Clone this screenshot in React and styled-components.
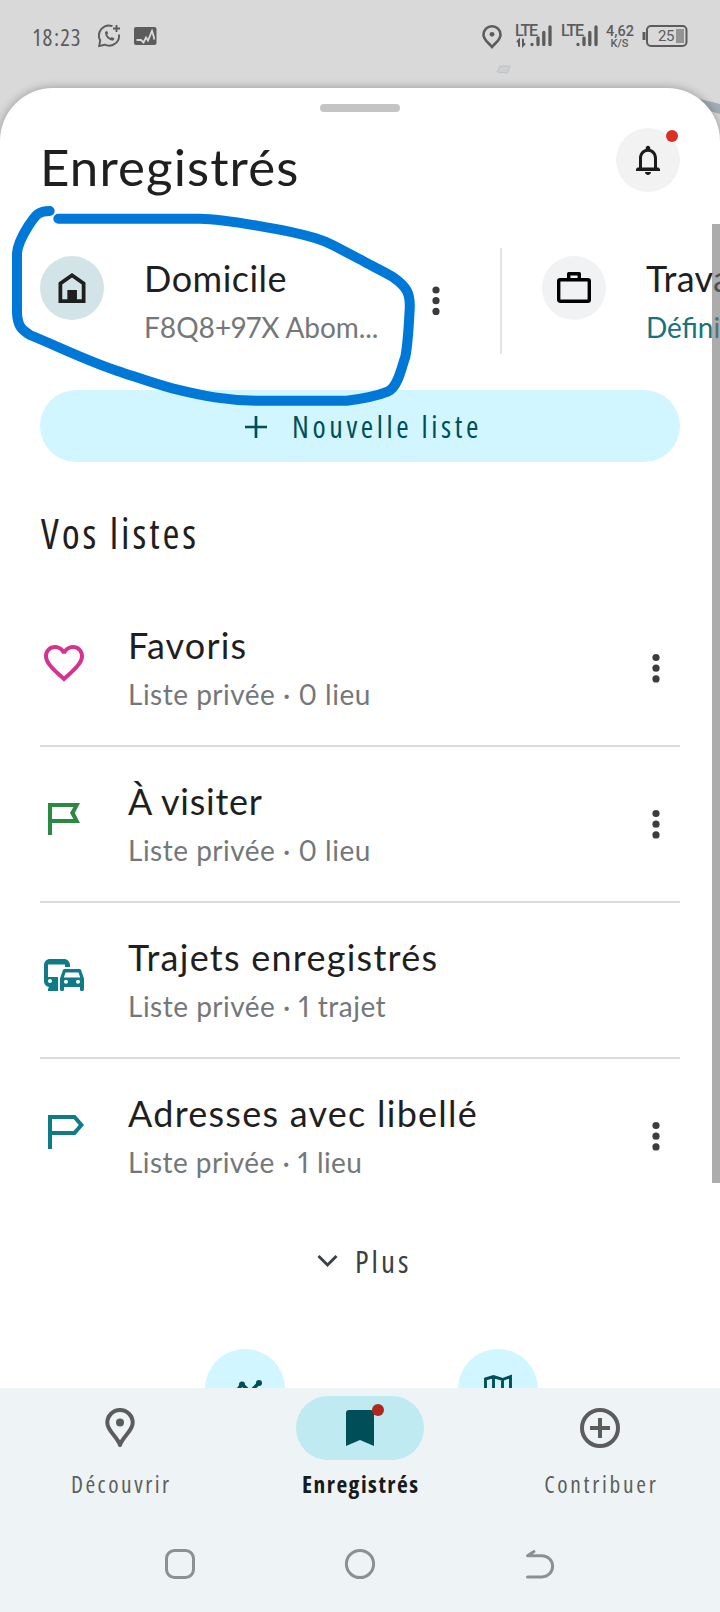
import React from 'react';
import styled, { createGlobalStyle } from 'styled-components';

const GlobalStyle = createGlobalStyle`
  * {
    box-sizing: border-box;
  }

  body {
    margin: 0;
    background-color: #fff;
    font-family: Lato, 'Open Sans', sans-serif;
    font-variant-numeric: proportional-nums;
    color: #1f1f1f;
  }

  svg {
    display: block;
    flex: none;
  }
`;

const Screen = styled.div`
  position: relative;
  width: 720px;
  height: 1612px;
  display: flex;
  flex-direction: column;
  background-color: #d9d9d9;
  overflow: hidden;
`;

const StatusBar = styled.header`
  height: 88px;
  flex: none;
  padding: 24px 32px 0 33px;
  display: flex;
  align-items: flex-start;
  color: #5c5c5c;
`;

const Clock = styled.span`
  width: 65px;
  height: 24px;
  font-family: 'Open Sans', sans-serif;
  font-stretch: 75%;
  font-size: 23px;
  line-height: 26px;
  letter-spacing: ${({ $spacing }) => $spacing}px;
  white-space: nowrap;
`;

const StatusIcons = styled.div`
  display: flex;
  gap: ${({ $gap }) => $gap || 0}px;
  margin-left: ${({ $push }) => ($push ? 'auto' : 0)};
`;

const Signal = styled.div`
  position: relative;
  width: 37px;
  height: 24px;
`;

const SignalLabel = styled.span`
  position: absolute;
  left: 0;
  top: 0;
  font: 500 16px/14px Roboto, sans-serif;
  letter-spacing: -1.2px;
`;

const Speed = styled.div`
  width: 27px;
  margin-left: -1px;
  text-align: center;
  font: 500 14.5px/14px Roboto, sans-serif;
  padding-top: 1px;

  & > small {
    display: block;
    font-size: 11px;
    line-height: 10px;
  }
`;

const Battery = styled.div`
  position: relative;
  width: 46px;
  height: 24px;

  & > span {
    position: absolute;
    left: 16px;
    top: 5px;
    font: 15px/15px Roboto, sans-serif;
    letter-spacing: -0.5px;
  }
`;

const MapPeek = styled.svg`
  position: absolute;
  left: 0;
  top: 0;
`;

const Sheet = styled.main`
  position: relative;
  height: 1300px;
  flex: none;
  display: flex;
  flex-direction: column;
  border-radius: 53px 53px 0 0;
  background-color: #fff;
  box-shadow: 0 0 10px rgba(0, 0, 0, 0.32);
`;

const Handle = styled.div`
  width: 80px;
  height: 8px;
  flex: none;
  margin: 16px auto 0;
  border-radius: 4px;
  background-color: #c4c4c4;
`;

const Header = styled.div`
  height: 80px;
  flex: none;
  padding: 16px 40px 0;
  display: flex;
  justify-content: space-between;
`;

const Title = styled.h1`
  margin: 9px 0 0;
  font-weight: 400;
  font-size: 51px;
  line-height: 60px;
  letter-spacing: ${({ $spacing }) => $spacing}px;
`;

const Circle = styled.div`
  position: relative;
  width: ${({ $size }) => $size || 64}px;
  height: ${({ $size }) => $size || 64}px;
  flex: none;
  display: flex;
  align-items: center;
  justify-content: center;
  border-radius: 50%;
  background-color: ${({ $color }) => $color};
`;

const Dot = styled.span`
  position: absolute;
  width: 12px;
  height: 12px;
  top: ${({ $top }) => $top}px;
  right: ${({ $right }) => $right}px;
  border-radius: 50%;
  background-color: ${({ $color }) => $color};
`;

const Places = styled.section`
  height: 198px;
  flex: none;
  padding: 56px 0 0 40px;
  display: flex;
  overflow: hidden;
`;

const Place = styled.div`
  width: ${({ $width }) => $width}px;
  height: 106px;
  flex: none;
  padding-top: 8px;
  display: flex;
  border-right: ${({ $divider }) => ($divider ? '2px solid #e3e4e6' : '0')};

  & + & {
    padding-left: 40px;
  }
`;

const PlaceText = styled.div`
  width: 326px;
  flex: none;
  padding: 0 0 0 40px;
`;

const Name = styled.div`
  font-size: 36px;
  line-height: 44px;
  letter-spacing: ${({ $spacing }) => $spacing || 0}px;
  white-space: nowrap;
`;

const Detail = styled.div`
  margin-top: 10px;
  font-size: 28px;
  line-height: 34px;
  letter-spacing: ${({ $spacing }) => $spacing || 0}px;
  color: ${({ $color }) => $color || '#747779'};
  white-space: nowrap;
`;

const NewList = styled.button`
  width: 640px;
  height: 72px;
  flex: none;
  margin: 0 40px;
  padding: 2px 0 0 205px;
  display: flex;
  align-items: center;
  gap: 25px;
  border: 0;
  border-radius: 36px;
  background-color: #d1f6ff;
  color: #004f58;
  font-family: 'Open Sans', sans-serif;
  font-stretch: 75%;
  font-size: 30px;
  line-height: 36px;
  letter-spacing: ${({ $spacing }) => $spacing}px;
`;

const Heading = styled.h2`
  margin: 47px 41px 34px;
  font-family: 'Open Sans', sans-serif;
  font-stretch: 75%;
  font-weight: 400;
  font-size: 41px;
  line-height: 48px;
  letter-spacing: ${({ $spacing }) => $spacing}px;
`;

const Lists = styled.ul`
  margin: 0 40px;
  padding: 0;
  list-style: none;
`;

const ListRow = styled.li`
  height: 156px;
  display: flex;
  border-bottom: 2px solid #dadbdc;

  &:last-child {
    border-bottom: 0;
  }

  & > svg:first-child {
    margin-top: 48px;
  }
`;

const RowText = styled.div`
  width: 562px;
  padding: 32px 0 0 40px;
`;

const More = styled.div`
  height: 38px;
  flex: none;
  margin-top: 27px;
  padding-left: 317px;
  display: flex;
  align-items: center;
  gap: 17px;
  font-family: 'Open Sans', sans-serif;
  font-stretch: 75%;
  font-size: 31px;
  line-height: 38px;
  color: #3c4043;
  letter-spacing: ${({ $spacing }) => $spacing}px;
`;

const Shortcuts = styled.div`
  height: 39px;
  margin-top: 69px;
  padding-left: 205px;
  display: flex;
  gap: 173px;
  overflow: hidden;
`;

const Scrollbar = styled.div`
  position: absolute;
  right: 0;
  top: 136px;
  width: 8px;
  height: 959px;
  background-color: rgba(117, 117, 117, 0.6);
`;

const Scribble = styled.svg`
  position: absolute;
  left: 0;
  top: 200px;
`;

const BottomBar = styled.footer`
  position: relative;
  height: 224px;
  flex: none;
  background-color: #eef4f6;
`;

const Tabs = styled.nav`
  height: 136px;
  padding-top: 8px;
  display: grid;
  grid-template-columns: repeat(3, 240px);
`;

const Tab = styled.div`
  display: flex;
  flex-direction: column;
  align-items: center;
  color: ${({ $active }) => ($active ? '#171b1c' : '#5c5f60')};
  font-family: 'Open Sans', sans-serif;
  font-stretch: 75%;
  font-weight: ${({ $active }) => ($active ? 700 : 400)};
  font-size: 23.5px;
  line-height: 30px;
  letter-spacing: ${({ $spacing }) => $spacing}px;
  text-indent: ${({ $spacing }) => $spacing}px;
`;

const Pill = styled.div`
  position: relative;
  width: 128px;
  height: 64px;
  margin-bottom: 9px;
  display: flex;
  align-items: center;
  justify-content: center;
  border-radius: 32px;
  background-color: ${({ $active }) => ($active ? '#c0eaf2' : 'transparent')};
`;

const SystemKeys = styled.div`
  height: 88px;
  padding: 22px 160px 0;
  display: flex;
  justify-content: space-between;
`;

const Dots = ({ top, step = 10.7 }) => (
  <svg width="12" height="120" fill="#3c3c3c">
    <circle cx="6" cy={top} r="3.6" />
    <circle cx="6" cy={top + step} r="3.6" />
    <circle cx="6" cy={top + step * 2} r="3.6" />
  </svg>
);

const SignalBars = ({ arrows }) => (
  <svg width="37" height="24" stroke="#5c5c5c" strokeWidth="3.3" strokeLinecap="round" fill="none">
    <path d="M17 20.300v.2M23 14v6.500M28.800 8.500v12M35 3v17.500" />
    {arrows && <path d="M2.500 17.500 4 16v6M8 15.500v6l1.500-1.500" strokeWidth="2" />}
  </svg>
);

const HeartIcon = () => (
  <svg width="48" height="48" viewBox="0 0 24 24" fill="#d63390">
    <path d="M16.500 3c-1.740 0-3.410.810-4.500 2.090C10.910 3.810 9.240 3 7.500 3 4.420 3 2 5.420 2 8.500c0 3.780 3.400 6.860 8.550 11.540L12 21.350l1.450-1.320C18.600 15.360 22 12.280 22 8.500 22 5.420 19.580 3 16.500 3zm-4.400 15.550-.1.100-.1-.1C7.140 14.240 4 11.390 4 8.500 4 6.500 5.500 5 7.500 5c1.540 0 3.040.990 3.570 2.360h1.870C13.460 5.990 14.960 5 16.500 5c2 0 3.500 1.500 3.500 3.500 0 2.890-3.140 5.740-7.900 10.050z" />
  </svg>
);

const FlagIcon = () => (
  <svg width="48" height="48" viewBox="0 0 24 24" fill="#2a8a41" fillRule="evenodd">
    <path d="M4 4h16l-2.600 5 2.600 5H6v6H4zM6 6v6h10.700L15 9l1.700-3z" />
  </svg>
);

const CommuteIcon = () => (
  <svg width="48" height="48" viewBox="0 0 24 24" fill="#0f7b89">
    <path d="M12 4H5C3.340 4 2 5.340 2 7v8c0 1.660 1.100 2.800 2.500 3L4 19v1h5v-7H4V6.800L12.500 6.800V8h2.500V7c0-1.660-1.340-3-3-3zM5 14c.550 0 1 .450 1 1s-.450 1-1 1-1-.450-1-1 .450-1 1-1zm15.570-4.340c-.140-.4-.520-.660-.970-.660h-7.190c-.460 0-.830.260-.980.660L10 13.770l.010 5.510c0 .380.310.720.690.720h.620c.380 0 .680-.380.680-.760V18h8v1.240c0 .380.310.760.690.760h.610c.380 0 .690-.340.690-.720l.010-1.370v-4.140l-1.430-4.110zm-7.800 1.040h6.500l.85 2.600h-8.200l.85-2.600zM13 16.400c-.550 0-1-.450-1-1s.450-1 1-1 1 .450 1 1-.450 1-1 1zm6 0c-.550 0-1-.450-1-1s.450-1 1-1 1 .450 1 1-.450 1-1 1z" />
  </svg>
);

const LabelIcon = () => (
  <svg width="48" height="48" viewBox="0 0 24 24" fill="#0f7b89" fillRule="evenodd">
    <path d="M4 4h13.700L22 9l-4.300 5H6v7H4zM6 6v6h10.800l2.600-3-2.600-3z" />
  </svg>
);

const lists = [
  { name: 'Favoris', detail: 'Liste privée · 0 lieu', icon: <HeartIcon />, menu: true, spacing: [1.15, 0.5] },
  { name: 'À visiter', detail: 'Liste privée · 0 lieu', icon: <FlagIcon />, menu: true, spacing: [0.75, 0.5] },
  { name: 'Trajets enregistrés', detail: 'Liste privée · 1 trajet', icon: <CommuteIcon />, menu: false, spacing: [1.25, 0.5] },
  { name: 'Adresses avec libellé', detail: 'Liste privée · 1 lieu', icon: <LabelIcon />, menu: true, spacing: [1.25, 0.45] },
];

const Status = () => (
  <StatusBar>
    <Clock $spacing={1.4}>18:23</Clock>
    <StatusIcons $gap={13}>
      <svg width="23" height="24" fill="none" stroke="#5c5c5c" strokeWidth="1.900">
        <path d="M14.500 2.200A10 10 0 0 0 2.200 16.300L1.200 22l5.600-1.300A10 10 0 0 0 21 10.500M18.500 1v7M15 4.500h7" />
        <path d="M7 8c0 5 4 8.500 8.500 8.600l1-2-2.700-1.600-1.400 1C10.800 13.300 9.700 12 9.200 10.600l1-1.300L9 6.800z" fill="#5c5c5c" stroke="none" />
      </svg>
      <svg width="24" height="24" fill="none">
        <rect x="0" y="3" width="22.500" height="18" rx="2" fill="#5c5c5c" />
        <path d="M2.500 16h4.500l2.500 2.500 2.500-5 2 3L18 7l2 6.500v2" stroke="#d9d9d9" strokeWidth="1.800" />
      </svg>
    </StatusIcons>
    <StatusIcons $push>
      <svg width="33" height="26" fill="none" stroke="#5c5c5c" strokeWidth="2.600">
        <path d="M10 2.200a8.500 8.500 0 0 0-8.500 8.500c0 5.200 5 7.800 8.500 12.300 3.500-4.500 8.500-7.100 8.500-12.300A8.500 8.500 0 0 0 10 2.200z" />
        <circle cx="10" cy="10.300" r="2.400" fill="#5c5c5c" stroke="none" />
      </svg>
      <StatusIcons $gap={9}>
        <Signal>
          <SignalLabel>LTE</SignalLabel>
          <SignalBars arrows />
        </Signal>
        <Signal>
          <SignalLabel>LTE</SignalLabel>
          <SignalBars />
        </Signal>
        <Speed>
          4,62
          <small>K/S</small>
        </Speed>
        <Battery>
          <svg width="46" height="24" fill="none" stroke="#5c5c5c" strokeWidth="2">
            <rect x="5" y="2" width="39.500" height="20" rx="4" />
            <path d="M2 8v8" strokeWidth="3" />
            <rect x="34" y="5" width="8" height="14" fill="#949494" stroke="none" />
          </svg>
          <span>25</span>
        </Battery>
      </StatusIcons>
    </StatusIcons>
  </StatusBar>
);

const App = () => (
  <Screen>
    <GlobalStyle />
    <MapPeek width="720" height="140">
      <path d="M500 66h10l-2.500 7-10.500-1z" fill="#cdcfd1" stroke="#bfc2c6" />
      <path d="M696 98l24 6v10l-20-6z" fill="#a3acb7" />
    </MapPeek>
    <Status />
    <Sheet>
      <Handle />
      <Header>
        <Title $spacing={1.1}>Enregistrés</Title>
        <Circle $color="#f2f2f2">
          <svg width="36" height="36" viewBox="0 0 24 24" fill="#1b1b1b">
            <path d="M12 22c1.100 0 2-.9 2-2h-4c0 1.100.9 2 2 2zm6-5v-6c0-3.070-1.630-5.640-4.500-6.320V4c0-.830-.670-1.500-1.500-1.500s-1.500.670-1.500 1.500v.680C7.640 5.360 6 7.920 6 11v6H5l-1 1v1.300h16V18l-1-1h-1zm-2 0H8v-6c0-2.480 1.510-4.500 4-4.500s4 2.020 4 4.500v6z" />
          </svg>
          <Dot $top={2} $right={2} $color="#d93025" />
        </Circle>
      </Header>
      <Places>
        <Place $width={462} $divider>
          <Circle $color="#d3e4e9">
            <svg width="36" height="36" viewBox="0 0 24 24" fill="#1f1f1f" fillRule="evenodd">
              <path d="M12 2l9 6.400V22H3V8.400zM5.500 9.700v9.800h3.400v-6.200h6.400v6.200h3.200V9.700L12 5z" />
            </svg>
          </Circle>
          <PlaceText>
            <Name $spacing={0.5}>Domicile</Name>
            <Detail $spacing={-0.05}>F8Q8+97X Abom...</Detail>
          </PlaceText>
          <Dots top={34} />
        </Place>
        <Place $width={400}>
          <Circle $color="#f1f2f4">
            <svg width="36" height="36" fill="none" stroke="#000" strokeWidth="3.400" strokeLinejoin="round">
              <rect x="2.700" y="9.700" width="30.600" height="21.600" rx="1.500" />
              <path d="M12.700 9.500V3.700h10.600v5.800" />
            </svg>
          </Circle>
          <PlaceText>
            <Name $spacing={0.3}>Travail</Name>
            <Detail $color="#15737d">Définir</Detail>
          </PlaceText>
        </Place>
      </Places>
      <NewList $spacing={3.6}>
        <svg width="22" height="22" stroke="#004f58" strokeWidth="2.700">
          <path d="M11 0v22M0 11h22" />
        </svg>
        Nouvelle liste
      </NewList>
      <Heading $spacing={2.9}>Vos listes</Heading>
      <Lists>
        {lists.map(({ name, detail, icon, menu, spacing }) => (
          <ListRow key={name}>
            {icon}
            <RowText>
              <Name $spacing={spacing[0]}>{name}</Name>
              <Detail $spacing={spacing[1]}>{detail}</Detail>
            </RowText>
            {menu && <Dots top={66.5} />}
          </ListRow>
        ))}
      </Lists>
      <More $spacing={3}>
        <svg width="21" height="14" fill="none" stroke="#3c4043" strokeWidth="2.900">
          <path d="M1.500 2l9 9 9-9" />
        </svg>
        Plus
      </More>
      <Shortcuts>
        <Circle $size={80} $color="#d1f6ff">
          <svg width="40" height="40" fill="none" stroke="#004f58" strokeWidth="3.400">
            <path d="M4 33L17 15l8 8L34 14" />
            <circle cx="17" cy="15.500" r="3" fill="#004f58" stroke="none" />
            <circle cx="34" cy="14" r="3" fill="#004f58" stroke="none" />
          </svg>
        </Circle>
        <Circle $size={80} $color="#d1f6ff">
          <svg width="30" height="30" fill="none" stroke="#004f58" strokeWidth="2.900">
            <path d="M2.500 5l8-2.500 9 3 8-3v22l-8 3-9-3-8 3zM10.500 2.500v22M19.500 5.500v22" />
          </svg>
        </Circle>
      </Shortcuts>
      <Scrollbar />
    </Sheet>
    <BottomBar>
      <Tabs>
        <Tab $spacing={2.5}>
          <Pill>
            <svg width="32" height="42" fill="none" stroke="#5c5c5c" strokeWidth="4">
              <path d="M16 3A12.700 12.700 0 0 0 3.300 15.700C3.300 24 13 29 16 38 19 29 28.700 24 28.700 15.700A12.700 12.700 0 0 0 16 3z" strokeLinejoin="round" />
              <circle cx="16" cy="15.500" r="4" fill="#5c5c5c" stroke="none" />
            </svg>
          </Pill>
          Découvrir
        </Tab>
        <Tab $active $spacing={1.5}>
          <Pill $active>
            <svg width="28" height="36" fill="#004f58">
              <path d="M3 0h22a3 3 0 0 1 3 3v33l-14-6-14 6V3a3 3 0 0 1 3-3z" />
            </svg>
            <Dot $top={8} $right={40} $color="#b3261e" />
          </Pill>
          Enregistrés
        </Tab>
        <Tab $spacing={2.7}>
          <Pill>
            <svg width="40" height="40" fill="none" stroke="#5c5c5c" strokeWidth="4">
              <circle cx="20" cy="20" r="18" />
              <path d="M20 10v20M10 20h20" />
            </svg>
          </Pill>
          Contribuer
        </Tab>
      </Tabs>
      <SystemKeys>
        <svg width="40" height="40" fill="none" stroke="#8d9090" strokeWidth="3">
          <rect x="6.500" y="4.500" width="27" height="27" rx="8" />
        </svg>
        <svg width="40" height="40" fill="none" stroke="#8d9090" strokeWidth="3">
          <circle cx="20" cy="18" r="13.600" />
        </svg>
        <svg width="40" height="40" fill="none" stroke="#8d9090" strokeWidth="3" strokeLinecap="round" strokeLinejoin="round">
          <path d="M14 5.500L7.500 9.700H22a10.600 10.600 0 0 1 0 21.200H7.500" />
        </svg>
      </SystemKeys>
    </BottomBar>
    <Scribble width="440" height="280" viewBox="0 0 1320 840" fill="none" stroke="#0078d7" strokeWidth="30" strokeLinecap="round" strokeLinejoin="round">
      <path d="M149 33C110 33 105 50 85 78C65 110 52 135 51 160V340C53 375 62 388 90 405C180 442 260 482 350 512C420 535 460 550 520 566C610 588 680 602 770 602H1040C1090 596 1130 588 1165 574C1195 560 1205 500 1216 470C1224 430 1226 380 1229 330C1232 280 1220 260 1180 232C1140 208 1110 196 1080 178L1000 136C980 126 965 120 945 114C890 98 850 90 800 82C730 70 660 56 600 56H175" />
    </Scribble>
  </Screen>
);

export default App;
